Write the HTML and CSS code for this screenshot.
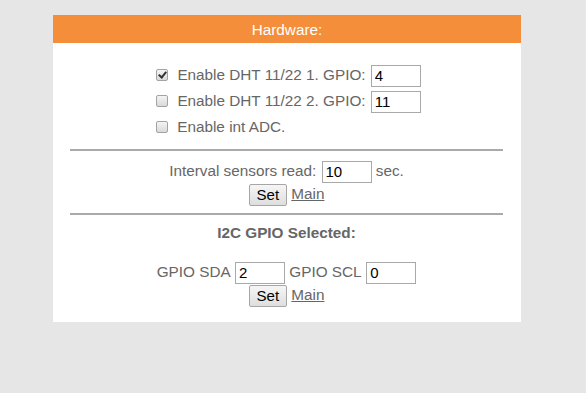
FILE: index.html
```html
<!DOCTYPE html>
<html lang="en">
<head>
  <meta charset="UTF-8">
  <title>Hardware</title>
  <link rel="stylesheet" href="styles.css">
</head>
<body>
  <div class="box">
    <div class="header">Hardware:</div>
    <div class="content">
      <form class="sensors">
        <div class="row"><input type="checkbox" checked> Enable DHT 11/22 1. GPIO: <input type="text" class="num" value="4"></div>
        <div class="row"><input type="checkbox"> Enable DHT 11/22 2. GPIO: <input type="text" class="num" value="11"></div>
        <div class="row left"><input type="checkbox"> Enable int ADC.</div>
      </form>
      <hr>
      <form class="block">
        <div class="row">Interval sensors read: <input type="text" class="num" value="10"> sec.</div>
        <div class="row"><button type="button">Set</button> <a href="#">Main</a></div>
      </form>
      <hr>
      <form class="block">
        <div class="title">I2C GPIO Selected:</div>
        <div class="row">GPIO SDA <input type="text" class="num" value="2"> GPIO SCL <input type="text" class="num" value="0"></div>
        <div class="row"><button type="button">Set</button> <a href="#">Main</a></div>
      </form>
    </div>
  </div>
</body>
</html>
```

FILE: styles.css
```css
body {
  background-color: #e6e6e6;
  margin: 0;
  padding: 15px 0 0 53px;
  font-family: "Liberation Sans", Arial, sans-serif;
  font-size: 15.3px;
  color: #666;
}

.box {
  width: 468px;
  height: 307px;
  background-color: #fff;
}

.header {
  background-color: #f48e3a;
  color: #fff;
  text-align: center;
  height: 28px;
  line-height: 29px;
}

.content {
  padding: 0 18px 0 17px;
}

.sensors {
  display: flex;
  flex-direction: column;
  align-items: center;
  padding: 19px 0 1px 4px;
}

.sensors .row {
  height: 26px;
  line-height: 26px;
}

.sensors .left {
  align-self: flex-start;
  margin-left: 82px;
}

input[type="checkbox"] {
  appearance: none;
  -webkit-appearance: none;
  position: relative;
  box-sizing: border-box;
  width: 12px;
  height: 12px;
  margin: 0 5px 0 0;
  vertical-align: -1px;
  border: 1px solid #a3a3a3;
  border-radius: 2px;
  background: linear-gradient(#f4f4f4, #d9d9d9);
}

input[type="checkbox"]:checked::before {
  content: "";
  position: absolute;
  left: 3px;
  top: 0;
  width: 3px;
  height: 6px;
  border-right: 2px solid #333;
  border-bottom: 2px solid #333;
  transform: rotate(40deg);
}

.num {
  width: 50px;
  height: 22px;
  box-sizing: border-box;
  border: 1px solid #a9a9a9;
  padding: 1px 3px;
  font-family: "Liberation Sans", Arial, sans-serif;
  font-size: 15px;
  color: #000;
  vertical-align: middle;
  margin: 0 0 0 1px;
}

hr {
  border: none;
  border-top: 2px solid #aaa;
  margin: 8px 0 6px;
}

.block {
  text-align: center;
}

.block .row {
  height: 23px;
  line-height: 23px;
}

.block .row:first-child {
  margin-top: 8px;
}

.title {
  font-weight: bold;
  margin: 9px 0 18px;
}

button {
  font-family: "Liberation Sans", Arial, sans-serif;
  font-size: 15px;
  color: #000;
  background: linear-gradient(#f6f6f6, #dedede);
  border: 1px solid #a6a6a6;
  border-radius: 2px;
  height: 22px;
  padding: 0 7px;
  vertical-align: middle;
}

a {
  color: #666;
}
```
